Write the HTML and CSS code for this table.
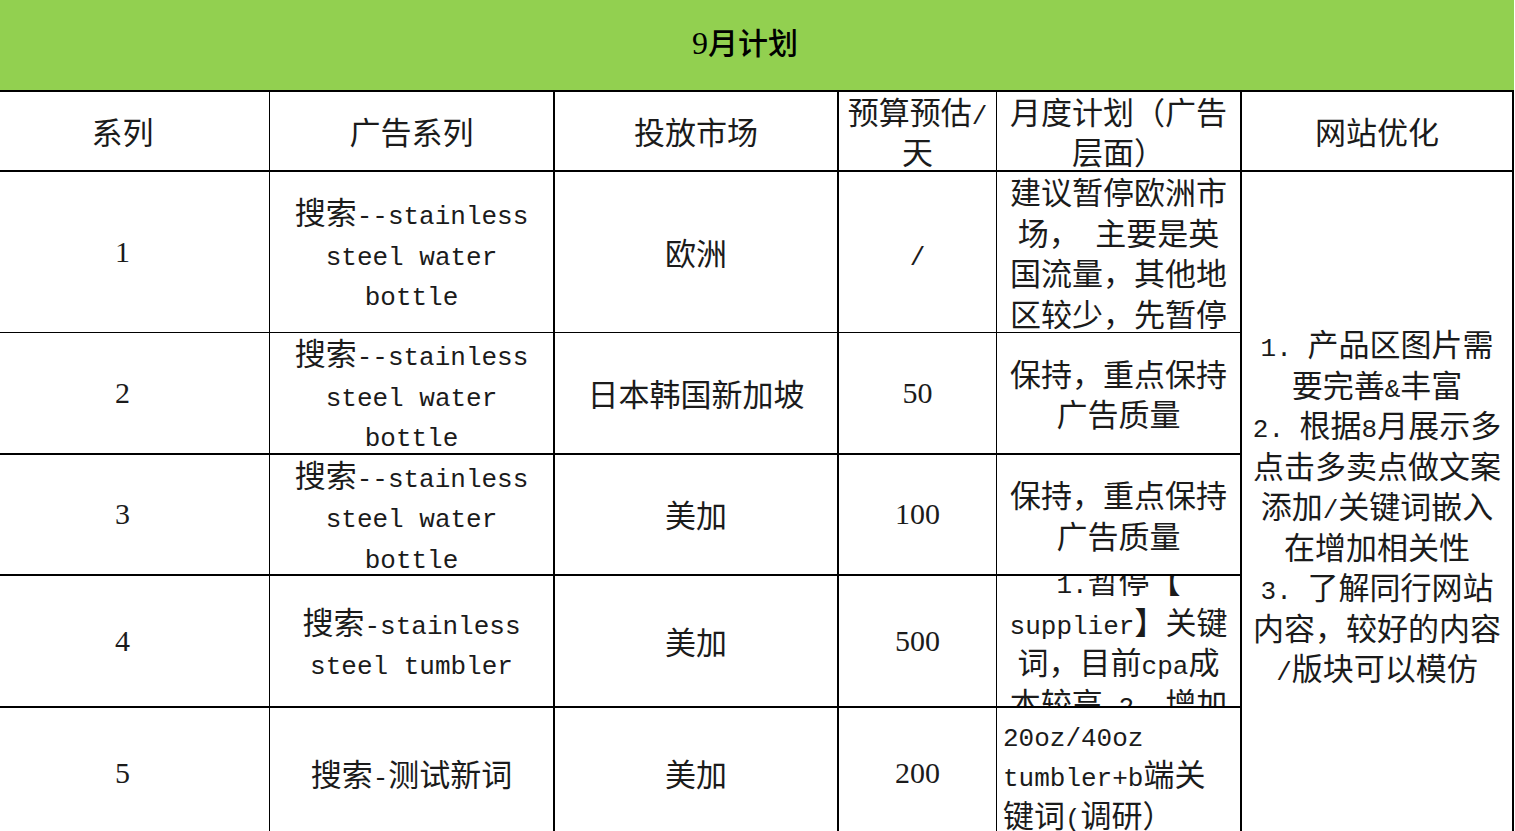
FILE: index.html
```html
<!DOCTYPE html>
<html lang="zh-CN">
<head>
<meta charset="utf-8">
<title>9月计划</title>
<link rel="stylesheet" href="styles.css">
</head>
<body>
<div class="sheet">
  <div class="title"><div class="t"><span class="tnum">9</span>月计划</div></div>

  <div class="cell c1 hd"><div class="t">系列</div></div>
  <div class="cell c2 hd"><div class="t">广告系列</div></div>
  <div class="cell c3 hd"><div class="t">投放市场</div></div>
  <div class="cell c4 hd"><div class="t">预算预估<span class="en">/</span><br>天</div></div>
  <div class="cell c5 hd"><div class="t">月度计划（广告<br>层面）</div></div>
  <div class="cell c6 hd"><div class="t">网站优化</div></div>

  <div class="cell c1 r1"><div class="t num">1</div></div>
  <div class="cell c2 r1"><div class="t">搜索<span class="en">--stainless</span><br><span class="en">steel water</span><br><span class="en">bottle</span></div></div>
  <div class="cell c3 r1"><div class="t">欧洲</div></div>
  <div class="cell c4 r1"><div class="t"><span class="en">/</span></div></div>
  <div class="cell c5 r1"><div class="t">建议暂停欧洲市<br>场，<span class="en"> </span>主要是英<br>国流量，其他地<br>区较少，先暂停</div></div>
  <div class="cell c6 merged"><div class="t"><span class="en">1. </span>产品区图片需<br>要完善<span class="en">&amp;</span>丰富<br><span class="en">2. </span>根据<span class="en">8</span>月展示多<br>点击多卖点做文案<br>添加<span class="en">/</span>关键词嵌入<br>在增加相关性<br><span class="en">3. </span>了解同行网站<br>内容，较好的内容<br><span class="en">/</span>版块可以模仿</div></div>

  <div class="cell c1 r2"><div class="t num">2</div></div>
  <div class="cell c2 r2"><div class="t">搜索<span class="en">--stainless</span><br><span class="en">steel water</span><br><span class="en">bottle</span></div></div>
  <div class="cell c3 r2"><div class="t">日本韩国新加坡</div></div>
  <div class="cell c4 r2"><div class="t num">50</div></div>
  <div class="cell c5 r2"><div class="t">保持，重点保持<br>广告质量</div></div>

  <div class="cell c1 r3"><div class="t num">3</div></div>
  <div class="cell c2 r3"><div class="t">搜索<span class="en">--stainless</span><br><span class="en">steel water</span><br><span class="en">bottle</span></div></div>
  <div class="cell c3 r3"><div class="t">美加</div></div>
  <div class="cell c4 r3"><div class="t num">100</div></div>
  <div class="cell c5 r3"><div class="t">保持，重点保持<br>广告质量</div></div>

  <div class="cell c1 r4"><div class="t num">4</div></div>
  <div class="cell c2 r4"><div class="t">搜索<span class="en">-stainless</span><br><span class="en">steel tumbler</span></div></div>
  <div class="cell c3 r4"><div class="t">美加</div></div>
  <div class="cell c4 r4"><div class="t num">500</div></div>
  <div class="cell c5 r4"><div class="t"><span class="en">1.</span>暂停【<br><span class="en">supplier</span>】关键<br>词，目前<span class="en">cpa</span>成<br>本较高<span class="en"> 2. </span>增加</div></div>

  <div class="cell c1 r5"><div class="t num">5</div></div>
  <div class="cell c2 r5"><div class="t">搜索<span class="en">-</span>测试新词</div></div>
  <div class="cell c3 r5"><div class="t">美加</div></div>
  <div class="cell c4 r5"><div class="t num">200</div></div>
  <div class="cell c5 r5 left"><div class="t"><span class="en">20oz/40oz</span><br><span class="en">tumbler+b</span>端关<br>键词<span class="en">(</span>调研）</div></div>
</div>
</body>
</html>
```

FILE: styles.css
```css
html, body {
  margin: 0;
  padding: 0;
  background: #ffffff;
  overflow: hidden;
}

body {
  width: 1515px;
  height: 831px;
}

.sheet {
  margin-left: -24px;
  width: 1538px;
  display: grid;
  grid-template-columns: 294px 285px 284px 158px 245px 272px;
  grid-template-rows: 92px 80px 161px 122px 121px 132px 133px;
  font-family: "Noto Sans CJK SC", "Noto Sans", sans-serif;
  font-size: 31px;
  line-height: 40.5px;
  color: #1b1b1b;
}

.title {
  grid-column: 1 / -1;
  background: #92d050;
  border-bottom: 2px solid #000;
  box-sizing: border-box;
  display: flex;
  align-items: center;
  justify-content: center;
  padding-bottom: 7px;
  color: #000;
  font-size: 30px;
  font-weight: 500;
}

.tnum {
  font-family: "Liberation Serif", "DejaVu Serif", serif;
  font-size: 32px;
  line-height: 1;
}

.cell {
  box-sizing: border-box;
  display: flex;
  align-items: center;
  justify-content: center;
  text-align: center;
  overflow: hidden;
  padding: 0 4px;
  border-color: #000;
  border-style: solid;
  border-width: 0;
}

.t {
  white-space: nowrap;
}

.en {
  font-family: "Liberation Mono", "DejaVu Sans Mono", monospace;
  font-size: 26px;
  line-height: 1;
}

.num {
  font-family: "Liberation Serif", "DejaVu Serif", serif;
  font-size: 30px;
}

.left {
  justify-content: flex-start;
  text-align: left;
  padding-left: 6px;
}

/* column borders */
.c1 { border-right-width: 1px; }
.c2 { border-right-width: 2px; }
.c3 { border-right-width: 2px; }
.c4 { border-right-width: 1px; }
.c5 { border-right-width: 2px; }
.c6 { border-right-width: 2px; }

/* row borders */
.hd { border-bottom-width: 2px; }
.r1 { border-bottom-width: 1px; }
.r2 { border-bottom-width: 2px; }
.r3 { border-bottom-width: 2px; }
.r4 { border-bottom-width: 2px; }
.r5 { border-bottom-width: 2px; }

.merged {
  grid-row: span 5;
  border-bottom-width: 2px;
}
```
